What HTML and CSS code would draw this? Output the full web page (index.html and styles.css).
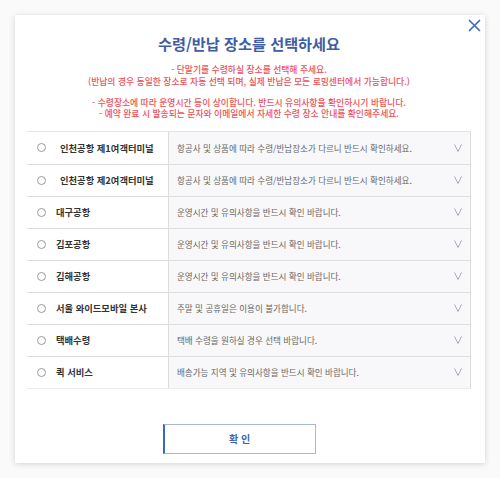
FILE: index.html
```html
<!DOCTYPE html>
<html lang="ko">
<head>
<meta charset="utf-8">
<link rel="stylesheet" href="styles.css">
</head>
<body>
<div class="modal">
  <button class="close" aria-label="닫기">
    <svg width="13" height="13" viewBox="0 0 13 13"><path d="M1 1L12 12M12 1L1 12" stroke="#3f68b8" stroke-width="1.6" fill="none"/></svg>
  </button>
  <h1 class="title">수령/반납 장소를 선택하세요</h1>
  <div class="notice">
    <p>- 단말기를 수령하실 장소를 선택해 주세요.<br>(반납의 경우 동일한 장소로 자동 선택 되며, 실제 반납은 모든 로밍센터에서 가능합니다.)</p>
    <p>- 수령장소에 따라 운영시간 등이 상이합니다. 반드시 유의사항을 확인하시기 바랍니다.<br>- 예약 완료 시 발송되는 문자와 이메일에서 자세한 수령 장소 안내를 확인해주세요.</p>
  </div>
  <div class="list">
    <div class="row">
      <div class="name"><span class="radio"></span><span class="label wide">인천공항 제1여객터미널</span></div>
      <div class="desc"><span>항공사 및 상품에 따라 수령/반납장소가 다르니 반드시 확인하세요.</span><svg class="chev" width="8" height="8" viewBox="0 0 8 8"><path d="M0.5 0.5L4 7.5L7.5 0.5" stroke="#a3abc2" stroke-width="1" fill="none"/></svg></div>
    </div>
    <div class="row">
      <div class="name"><span class="radio"></span><span class="label wide">인천공항 제2여객터미널</span></div>
      <div class="desc"><span>항공사 및 상품에 따라 수령/반납장소가 다르니 반드시 확인하세요.</span><svg class="chev" width="8" height="8" viewBox="0 0 8 8"><path d="M0.5 0.5L4 7.5L7.5 0.5" stroke="#a3abc2" stroke-width="1" fill="none"/></svg></div>
    </div>
    <div class="row">
      <div class="name"><span class="radio"></span><span class="label">대구공항</span></div>
      <div class="desc"><span>운영시간 및 유의사항을 반드시 확인 바랍니다.</span><svg class="chev" width="8" height="8" viewBox="0 0 8 8"><path d="M0.5 0.5L4 7.5L7.5 0.5" stroke="#a3abc2" stroke-width="1" fill="none"/></svg></div>
    </div>
    <div class="row">
      <div class="name"><span class="radio"></span><span class="label">김포공항</span></div>
      <div class="desc"><span>운영시간 및 유의사항을 반드시 확인 바랍니다.</span><svg class="chev" width="8" height="8" viewBox="0 0 8 8"><path d="M0.5 0.5L4 7.5L7.5 0.5" stroke="#a3abc2" stroke-width="1" fill="none"/></svg></div>
    </div>
    <div class="row">
      <div class="name"><span class="radio"></span><span class="label">김해공항</span></div>
      <div class="desc"><span>운영시간 및 유의사항을 반드시 확인 바랍니다.</span><svg class="chev" width="8" height="8" viewBox="0 0 8 8"><path d="M0.5 0.5L4 7.5L7.5 0.5" stroke="#a3abc2" stroke-width="1" fill="none"/></svg></div>
    </div>
    <div class="row">
      <div class="name"><span class="radio"></span><span class="label">서울 와이드모바일 본사</span></div>
      <div class="desc"><span>주말 및 공휴일은 이용이 불가합니다.</span><svg class="chev" width="8" height="8" viewBox="0 0 8 8"><path d="M0.5 0.5L4 7.5L7.5 0.5" stroke="#a3abc2" stroke-width="1" fill="none"/></svg></div>
    </div>
    <div class="row">
      <div class="name"><span class="radio"></span><span class="label">택배수령</span></div>
      <div class="desc"><span>택배 수령을 원하실 경우 선택 바랍니다.</span><svg class="chev" width="8" height="8" viewBox="0 0 8 8"><path d="M0.5 0.5L4 7.5L7.5 0.5" stroke="#a3abc2" stroke-width="1" fill="none"/></svg></div>
    </div>
    <div class="row">
      <div class="name"><span class="radio"></span><span class="label">퀵 서비스</span></div>
      <div class="desc"><span>배송가능 지역 및 유의사항을 반드시 확인 바랍니다.</span><svg class="chev" width="8" height="8" viewBox="0 0 8 8"><path d="M0.5 0.5L4 7.5L7.5 0.5" stroke="#a3abc2" stroke-width="1" fill="none"/></svg></div>
    </div>
  </div>
  <div class="actions">
    <button class="confirm">확 인</button>
  </div>
</div>
</body>
</html>
```

FILE: styles.css
```css
* { box-sizing: border-box; }
html, body { margin: 0; padding: 0; }
body {
  background: #fafafa;
  font-family: "Noto Sans CJK KR", "Noto Sans", sans-serif;
  width: 500px;
  height: 478px;
  overflow: hidden;
}
.modal {
  position: relative;
  margin: 15px 0 0 15px;
  width: 470px;
  height: 448px;
  background: #fff;
  box-shadow: 0 1px 6px rgba(0,0,0,0.16);
  padding: 17px 14px 0 12px;
  display: flex;
  flex-direction: column;
}
.close {
  position: absolute;
  top: 4px;
  right: 4px;
  width: 13px;
  height: 13px;
  padding: 0;
  border: 0;
  background: none;
  display: flex;
}
.title {
  margin: 0;
  text-align: center;
  font-size: 15.2px;
  line-height: 22px;
  font-weight: 700;
  color: #3d5ea4;
}
.notice {
  margin-top: 10px;
  text-align: center;
  color: #ef4f57;
  font-size: 8.8px;
  line-height: 11.5px;
  font-weight: 500;
}
.notice p { margin: 0; }
.notice p + p { margin-top: 9.5px; }
.list {
  margin-top: 11px;
  border-top: 1px solid #e4e4e4;
  border-bottom: 1px solid #ececec;
}
.row {
  display: grid;
  grid-template-columns: 142px 1fr;
  height: 32px;
}
.row + .row { border-top: 1px solid #dedede; }
.name {
  display: flex;
  align-items: center;
  padding-left: 10px;
  border-right: 1px solid #dcdcdc;
  background: #fff;
}
.radio {
  width: 9px;
  height: 9px;
  border: 1px solid #9a9a9a;
  border-radius: 50%;
  flex: none;
}
.label {
  margin-left: 10px;
  font-size: 9.3px;
  font-weight: 700;
  color: #333;
}
.label.wide { margin-left: 14px; }
.desc {
  display: flex;
  align-items: center;
  justify-content: space-between;
  padding: 0 8px 0 8px;
  background: #f8f8fa;
  border-right: 1px solid #dcdcdc;
  font-size: 8.55px;
  color: #666;
}
.chev { flex: none; }
.actions {
  display: flex;
  justify-content: center;
  margin-top: 35px;
  padding-right: 20px;
}
.confirm {
  width: 153px;
  height: 30px;
  background: #fff;
  border: 1px solid #a6b7dc;
  border-left: 2px solid #3a67c0;
  color: #3d62ad;
  font-family: "Noto Sans CJK KR", sans-serif;
  font-size: 10px;
  font-weight: 700;
  padding: 0;
}
```
